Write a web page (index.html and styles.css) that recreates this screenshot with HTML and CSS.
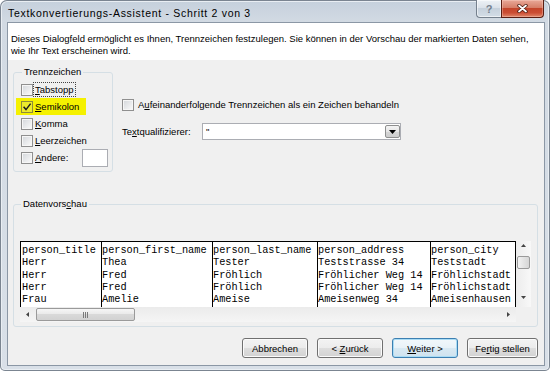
FILE: index.html
```html
<!DOCTYPE html>
<html lang="de">
<head>
  <meta charset="UTF-8">
  <title>Textkonvertierungs-Assistent - Schritt 2 von 3</title>
  <link rel="stylesheet" href="styles.css">
</head>
<body>
  <div class="window">
    <div class="titlebar">
      <span class="title">Textkonvertierungs-Assistent - Schritt 2 von 3</span>
      <div class="caption">
        <span class="cap-btn help">?</span>
        <span class="cap-btn close">
          <svg width="11" height="9" viewBox="0 0 11 9"><path d="M2 1.5 L9 7.5 M9 1.5 L2 7.5" stroke="#4b1a10" stroke-width="3.4" stroke-linecap="round"/><path d="M2 1.5 L9 7.5 M9 1.5 L2 7.5" stroke="#fff" stroke-width="1.8" stroke-linecap="round"/></svg>
        </span>
      </div>
    </div>

    <div class="client">
      <div class="intro">Dieses Dialogfeld ermöglicht es Ihnen, Trennzeichen festzulegen. Sie können in der Vorschau der markierten Daten sehen,<br>wie Ihr Text erscheinen wird.</div>

      <div class="options">
        <fieldset class="group delims">
          <legend>Trennzeichen</legend>
          <div class="check"><span class="box"></span><span class="label focus"><u>T</u>abstopp</span></div>
          <div class="check marked">
            <span class="box">
              <svg width="10" height="10" viewBox="0 0 10 10"><path d="M1.6 4.8 L4 7.6 L8.6 1.6" fill="none" stroke="#1c1c1c" stroke-width="1.5"/></svg>
            </span>
            <span class="label"><u>S</u>emikolon</span>
          </div>
          <div class="check"><span class="box"></span><span class="label"><u>K</u>omma</span></div>
          <div class="check"><span class="box"></span><span class="label"><u>L</u>eerzeichen</span></div>
          <div class="check"><span class="box"></span><span class="label"><u>A</u>ndere:</span><span class="textbox"></span></div>
        </fieldset>

        <div class="side">
          <div class="check"><span class="box"></span><span class="label">A<u>u</u>feinanderfolgende Trennzeichen als ein Zeichen behandeln</span></div>
          <div class="qualifier">
            <span class="label">Te<u>x</u>tqualifizierer:</span>
            <div class="combo">
              <span class="combo-value">"</span>
              <span class="combo-btn"><svg width="7" height="4" viewBox="0 0 7 4"><path d="M0 0 H7 L3.5 4 Z" fill="#000"/></svg></span>
            </div>
          </div>
        </div>
      </div>

      <fieldset class="group preview-group">
        <legend>Datenvors<u>c</u>hau</legend>
        <div class="preview">
          <div class="data">
            <div class="col c1">person_title
Herr
Herr
Herr
Frau</div>
            <div class="col c2">person_first_name
Thea
Fred
Fred
Amelie</div>
            <div class="col c3">person_last_name
Tester
Fröhlich
Fröhlich
Ameise</div>
            <div class="col c4">person_address
Teststrasse 34
Fröhlicher Weg 14
Fröhlicher Weg 14
Ameisenweg 34</div>
            <div class="col c5">person_city
Teststadt
Fröhlichstadt
Fröhlichstadt
Ameisenhausen</div>
          </div>
          <div class="vscroll">
            <span class="arrow up"><svg width="5" height="3" viewBox="0 0 5 3"><path d="M0 3 H5 L2.5 0 Z" fill="#444"/></svg></span>
            <span class="thumb v"></span>
            <span class="spacer"></span>
            <span class="arrow down"><svg width="5" height="3" viewBox="0 0 5 3"><path d="M0 0 H5 L2.5 3 Z" fill="#444"/></svg></span>
          </div>
          <div class="hscroll">
            <span class="arrow left"><svg width="3" height="5" viewBox="0 0 3 5"><path d="M3 0 V5 L0 2.5 Z" fill="#444"/></svg></span>
            <span class="thumb h"><svg width="5" height="6" viewBox="0 0 5 6"><path d="M0.5 0 V6 M2.5 0 V6 M4.5 0 V6" stroke="#7a7a7a" stroke-width="1"/></svg></span>
            <span class="spacer"></span>
            <span class="arrow right"><svg width="3" height="5" viewBox="0 0 3 5"><path d="M0 0 V5 L3 2.5 Z" fill="#444"/></svg></span>
          </div>
          <div class="corner"></div>
        </div>
      </fieldset>

      <div class="buttons">
        <button class="btn">Abbrechen</button>
        <button class="btn">&lt; <u>Z</u>urück</button>
        <button class="btn default"><u>W</u>eiter &gt;</button>
        <button class="btn wide">Fe<u>r</u>tig stellen</button>
      </div>
    </div>
  </div>
</body>
</html>
```

FILE: styles.css
```css
* { box-sizing: border-box; }
body { margin: 0; width: 550px; height: 371px; overflow: hidden; background: #fff; font-family: "Liberation Sans", Arial, sans-serif; font-size: 9.5px; color: #000; }

/* window frame */
.window { width: 550px; height: 371px; padding: 0 5px 5px 7px; border-radius: 7px 7px 5px 5px; background: linear-gradient(180deg, #c5d0dc 0, #d2dae3 22px, #d9e0e8 100%); box-shadow: inset 0 0 0 1px #7b8591, inset 0 0 0 2px #e9eef3; }
.titlebar { display: flex; justify-content: space-between; height: 22px; margin: 0 -5px 0 -7px; padding: 0 6px 0 8px; }
.title { padding-top: 7px; font-size: 10.5px; letter-spacing: .7px; line-height: 12px; color: #000; }
.caption { display: flex; height: 18px; }
.cap-btn { display: flex; align-items: center; justify-content: center; height: 18px; }
.help { width: 25px; border: 1px solid #75808d; border-top: 0; border-right: 0; border-radius: 0 0 0 4px; background: linear-gradient(#eef2f6, #dbe2ea 45%, #c6d1dc 50%, #d3dde7); box-shadow: inset 0 0 0 1px rgba(255,255,255,.55); color: #74808e; font-weight: bold; font-size: 11px; }
.close { width: 43px; border: 1px solid #5a1d12; border-top: 0; border-radius: 0 0 4px 0; background: linear-gradient(#e9a898, #d67e68 45%, #c4452b 50%, #cb4d33 75%, #e0876a); box-shadow: inset 0 0 0 1px rgba(255,220,210,.35); }

.client { height: 344px; border: 1px solid #8b97a5; background: #f0f0f0; }
.intro { height: 37px; background: #fff; padding: 10px 4px 0 3px; line-height: 12px; }

/* group boxes */
.group { margin: 0; padding: 0; min-width: 0; border: 1px solid #d5dfe5; border-radius: 3px; }
.group legend { margin-left: 1px; padding: 0 2px; line-height: 12px; }

.options { display: flex; align-items: flex-start; padding: 6px 0 0 5px; }
.delims { width: 100px; height: 106px; padding: 3px 4px 0 7px; }

.check { display: flex; align-items: center; height: 17px; }
.box { display: flex; align-items: center; justify-content: center; width: 12px; height: 12px; flex: none; border: 1px solid #8f8f8f; background: linear-gradient(135deg, #d3d6da, #fbfbfb); box-shadow: inset 0 0 0 1px #f6f6f6; }
.label { padding: 0 1px; border: 1px dotted transparent; line-height: 13px; white-space: nowrap; }
.label.focus { border-color: #444; }
.marked { margin-left: -5px; padding-left: 5px; background: linear-gradient(#f5f100, #f5f100) no-repeat 0 0 / 70px 17px; }
.marked .box { border-color: #8d8a3a; background: #ecea2c; box-shadow: none; }
.textbox { margin-left: auto; width: 26px; height: 18px; border: 1px solid #abadb3; background: #fff; }

.side { padding: 30px 0 0 9px; }
.side .check .label { margin-left: 2px; }
.qualifier { display: flex; align-items: center; height: 17px; margin-top: 10px; }
.qualifier .label { width: 80px; padding: 0; border: 0; }
.combo { display: flex; align-items: center; justify-content: space-between; width: 199px; height: 17px; padding: 0 0 0 3px; border: 1px solid #abadb3; background: #fff; }
.combo-btn { display: flex; align-items: center; justify-content: center; width: 15px; height: 13px; border: 1px solid #8e8f8f; border-radius: 2px; background: linear-gradient(#f4f4f4, #e6e6e6 50%, #d6d6d6 50%, #cdcdcd); }

/* preview */
.preview-group { width: 525px; margin: 26px 0 0 5px; padding: 31px 6px 4px; }
.preview { display: grid; grid-template-columns: 496px 15px; grid-template-rows: 66px 15px; }
.data { display: flex; overflow: hidden; border: 1px solid #000; border-bottom: 0; background: #fff; font-family: "Liberation Mono", "Courier New", monospace; font-size: 10.25px; line-height: 12.3px; }
.col { padding-top: 2px; border-left: 1px solid #000; white-space: pre; overflow: hidden; }
.c1 { width: 80px; padding-left: 1px; border-left: 0; }
.c2 { width: 111px; }
.c3 { width: 105px; }
.c4 { width: 113px; }
.c5 { flex: 1; }

.vscroll { display: flex; flex-direction: column; align-items: center; background: linear-gradient(90deg, #ececec, #f8f8f8); }
.vscroll .arrow { display: flex; align-items: center; justify-content: center; width: 15px; height: 8px; }
.vscroll .arrow.down { height: 9px; margin-bottom: 5px; }
.thumb.v { width: 13px; height: 13px; margin-top: 7px; border: 1px solid #9a9a9a; border-radius: 2px; background: linear-gradient(90deg, #f3f3f3, #e4e4e4 50%, #d6d6d6); }
.spacer { flex: 1; }
.hscroll { display: flex; align-items: center; background: linear-gradient(#ebebeb, #f5f5f5); }
.hscroll .arrow { display: flex; align-items: center; justify-content: center; width: 15px; height: 15px; }
.thumb.h { display: flex; align-items: center; justify-content: center; width: 99px; height: 13px; margin-left: 1px; border: 1px solid #9a9a9a; border-radius: 2px; background: linear-gradient(#f6f6f6, #e9e9e9 50%, #d9d9d9 50%, #d2d2d2); }
.corner { background: #f0f0f0; }

/* dialog buttons */
.buttons { display: flex; justify-content: flex-end; gap: 9px; padding: 11px 6px 0 0; }
.btn { width: 66px; height: 20px; padding: 0; font: inherit; color: #000; border: 1px solid #707070; border-radius: 3px; background: linear-gradient(#f3f3f3, #ececec 50%, #dedede 50%, #d2d2d2); box-shadow: inset 0 0 0 1px #fbfbfb; }
.btn.wide { width: 71px; }
.btn.default { border-color: #3c7fb1; box-shadow: inset 0 0 0 1px #a9dcf5; background: linear-gradient(#f2f8fb, #e8f2f8 50%, #d8e9f3 50%, #cfe3ef); }
```
